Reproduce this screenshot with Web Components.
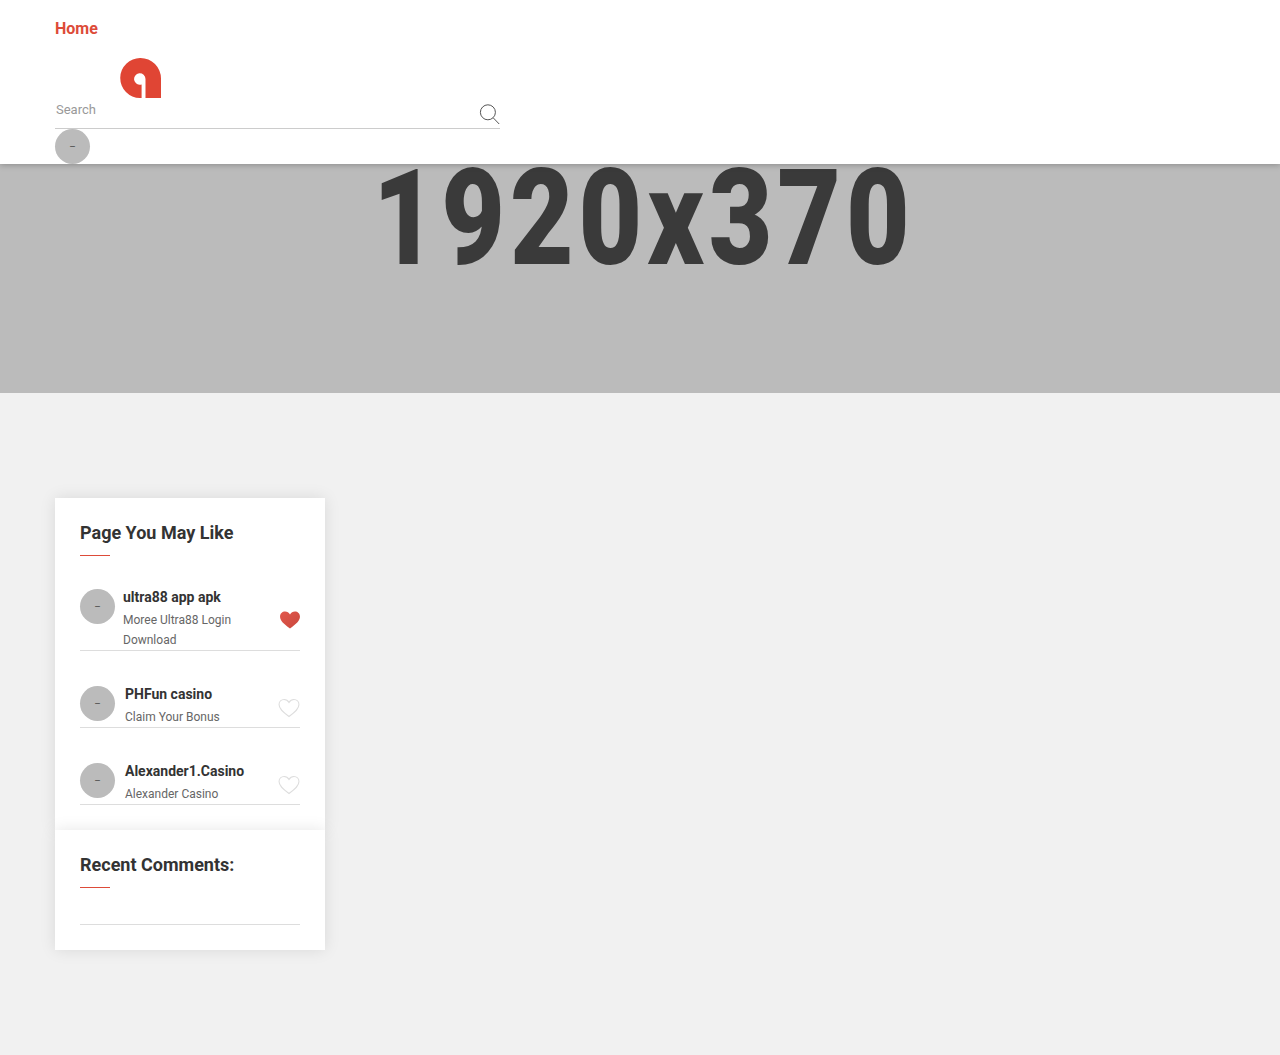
<!DOCTYPE html>
<html>
<head>
<meta charset="utf-8">
<title>Profile</title>
<style>
  html, body { margin: 0; background: #f1f1f1; font-family: Roboto, "Liberation Sans", sans-serif; }
  body { min-height: 1055px; }
</style>
</head>
<body>
<site-header></site-header>
<hero-banner>1920x370</hero-banner>
<side-bar>
  <side-card heading="Page You May Like">
    <like-item name="ultra88 app apk" liked wide>Moree Ultra88 Login Download</like-item>
    <like-item name="PHFun casino">Claim Your Bonus</like-item>
    <like-item name="Alexander1.Casino">Alexander Casino</like-item>
  </side-card>
  <side-card heading="Recent Comments:" class="comments"><div style="height:5px;border-bottom:1px solid #ddd"></div></side-card>
</side-bar>

<script>
const avatarStyle = `
  .avatar {
    width: 35px; height: 35px; border-radius: 50%;
    background: #bbb; color: #555;
    display: flex; align-items: center; justify-content: center;
    font: 10px/1 Roboto, sans-serif; flex: none;
  }`;

class SiteHeader extends HTMLElement {
  connectedCallback() {
    this.attachShadow({ mode: 'open' });
    this.shadowRoot.innerHTML = `
      <style>
        ${avatarStyle}
        :host {
          display: block; height: 164px; box-sizing: border-box;
          padding: 19px 0 0 55px; background: #fff;
          position: relative; z-index: 2;
          box-shadow: 0 1px 6px rgba(0,0,0,.25);
        }
        a { display: block; color: #dd4b39; font: 700 16px/20px Roboto, sans-serif; text-decoration: none; }
        .logo { display: block; margin: 19px 0 0 65px; width: 41px; height: 40px; }
        .search {
          width: 445px; height: 31px; box-sizing: border-box;
          border-bottom: 1px solid #ccc;
          display: flex; justify-content: space-between;
        }
        .search span { font: 13px/24px Roboto, sans-serif; color: #999; padding-left: 1px; }
        .search svg { width: 22px; height: 24px; margin: 6px -1px 0 0; }
      </style>
      <a href="#">Home</a>
      <svg class="logo" viewBox="0 0 41 40">
        <path fill="#e04534" d="M20.5 0A20.5 20.5 0 0 1 41 20.5V40H25.5V21A5.7 5.7 0 1 0 21.6 26.4V40H20A20 20 0 0 1 20.5 0Z"/>
      </svg>
      <div class="search">
        <span>Search</span>
        <svg viewBox="0 0 22 24" fill="none" stroke="#555" stroke-width="1">
          <circle cx="8.9" cy="8.3" r="7.5"/><path d="M14.2 13.8 20.2 20"/>
        </svg>
      </div>
      <div class="avatar">–</div>
    `;
  }
}

class HeroBanner extends HTMLElement {
  connectedCallback() {
    this.attachShadow({ mode: 'open' });
    this.shadowRoot.innerHTML = `
      <style>
        :host {
          display: flex; justify-content: center;
          height: 253px; margin-top: -24px; background: #bbb;
        }
        div {
          color: #3a3a3a; font: 900 134px/158px Roboto, sans-serif;
          transform: scaleX(.82); white-space: nowrap; letter-spacing: 6px;
          padding-left: 8px;
        }
      </style>
      <div><slot></slot></div>
    `;
  }
}

class SideBar extends HTMLElement {
  connectedCallback() {
    this.attachShadow({ mode: 'open' });
    this.shadowRoot.innerHTML = `
      <style>
        :host { display: block; width: 270px; margin: 105px 0 0 55px; }
      </style>
      <slot></slot>
    `;
  }
}

class SideCard extends HTMLElement {
  connectedCallback() {
    this.attachShadow({ mode: 'open' });
    this.shadowRoot.innerHTML = `
      <style>
        :host {
          display: block; background: #fff; padding: 25px;
          position: relative; box-shadow: 0 0 15px rgba(0,0,0,.1);
        }
        h3 { margin: 0; color: #333; font: 700 18px/20px Roboto, sans-serif; }
        .rule { width: 30px; height: 1px; background: #dd4b39; margin: 12px 0 31px; }
      </style>
      <h3>${this.getAttribute('heading')}</h3>
      <div class="rule"></div>
      <slot></slot>
    `;
  }
}

class LikeItem extends HTMLElement {
  connectedCallback() {
    const liked = this.hasAttribute('liked');
    const gap = this.hasAttribute('wide') ? 8 : 10;
    const id = 'g' + Math.random().toString(36).slice(2, 7);
    const heart = 'M10.5 18.5C4 13.5 1 10.5 1 6.5 1 3.5 3.2 1.5 5.8 1.5 7.8 1.5 9.5 2.6 10.5 4.4 11.5 2.6 13.2 1.5 15.2 1.5 17.8 1.5 20 3.5 20 6.5 20 10.5 17 13.5 10.5 18.5Z';
    this.attachShadow({ mode: 'open' });
    this.shadowRoot.innerHTML = `
      <style>
        ${avatarStyle}
        :host {
          display: flex; border-bottom: 1px solid #ddd;
          margin-bottom: 33px; position: relative;
        }
        :host(:last-child) { margin-bottom: 0; }
        .avatar { margin: 2px ${gap}px 0 0; }
        .text { flex: 1; min-width: 0; }
        h4 { margin: 0 0 3px; color: #333; font: 700 14px/20px Roboto, sans-serif; }
        p { margin: 0; color: #666; font: 12px/20px Roboto, sans-serif; }
        svg { width: 22px; height: 20px; flex: none; align-self: flex-end; margin: 0 ${liked ? -1 : 0}px ${liked ? 20 : 9}px 0; }
      </style>
      <div class="avatar">–</div>
      <div class="text">
        <h4>${this.getAttribute('name')}</h4>
        <p style="max-width:${liked ? 125 : 140}px"><slot></slot></p>
      </div>
      <svg viewBox="0 0 21 20" preserveAspectRatio="none">
        ${liked
          ? `<defs><linearGradient id="${id}" x1="0" y1="0" x2="1" y2="1"><stop offset="0" stop-color="#e2574c"/><stop offset="1" stop-color="#c9483d"/></linearGradient></defs><path d="${heart}" fill="url(#${id})"/>`
          : `<path d="${heart}" fill="#fff" stroke="#ddd"/>`}
      </svg>
    `;
  }
}

customElements.define('site-header', SiteHeader);
customElements.define('hero-banner', HeroBanner);
customElements.define('side-bar', SideBar);
customElements.define('side-card', SideCard);
customElements.define('like-item', LikeItem);
</script>
</body>
</html>
